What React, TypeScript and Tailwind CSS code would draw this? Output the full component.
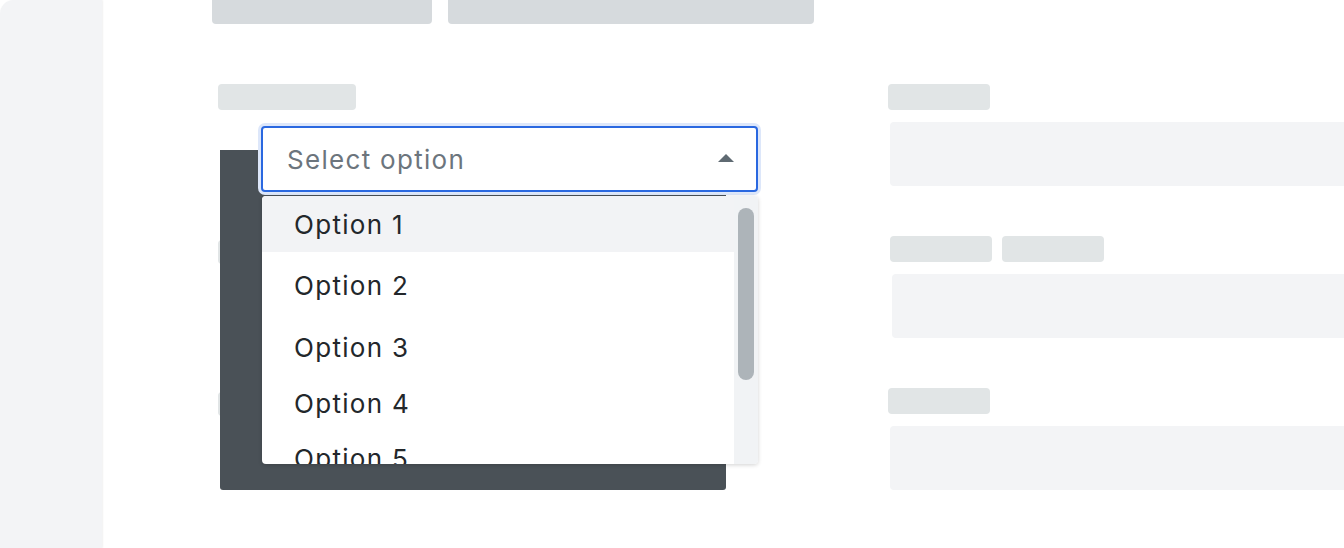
import React from 'react';

const options = [
  { label: 'Option 1', h: 'h-[56px]', active: true },
  { label: 'Option 2', h: 'h-[66px]', active: false },
  { label: 'Option 3', h: 'h-[58px]', active: false },
  { label: 'Option 4', h: 'h-[54px]', active: false },
  { label: 'Option 5', h: 'h-[56px]', active: false },
];

const FieldSkeleton: React.FC<{ labels: string[]; offset?: string }> = ({ labels, offset = '' }) => (
  <div className="flex flex-col">
    <div className="flex gap-[10px]">
      {labels.map((w, i) => (
        <div key={i} className={`${w} h-[26px] rounded-[4px] bg-[#e1e5e6]`} />
      ))}
    </div>
    <div className={`mt-[12px] h-[64px] w-[520px] rounded-[4px] bg-[#f3f4f6] ${offset}`} />
  </div>
);

export default function App() {
  return (
    <div className="flex h-[548px] w-[1344px] overflow-hidden bg-white font-['Inter','Noto_Sans',sans-serif]">
      {/* Sidebar */}
      <aside className="w-[102px] shrink-0 rounded-tl-[14px] bg-[#f3f4f6] shadow-[1px_0_2px_rgba(0,0,0,0.06)]" />

      {/* Main */}
      <main className="flex-1 pl-[110px]">
        <div className="flex gap-4">
          <div className="h-[24px] w-[220px] rounded-b-[4px] bg-[#d6dadd]" />
          <div className="h-[24px] w-[366px] rounded-b-[4px] bg-[#d6dadd]" />
        </div>

        <div className="mt-[60px] flex">
          {/* Left column */}
          <div className="w-[676px] shrink-0">
            <div className="ml-[6px] h-[26px] w-[138px] rounded-[4px] bg-[#e1e5e6]" />

            <div className="relative ml-[8px] mt-[40px] h-[340px] w-[506px]">
              <div className="absolute left-[-2px] top-[90px] h-[24px] w-[100px] rounded-[4px] bg-[#e1e5e6]" />
              <div className="absolute left-[-2px] top-[242px] h-[24px] w-[100px] rounded-[4px] bg-[#e1e5e6]" />
              <div className="absolute inset-0 rounded-b-[3px] bg-[#4a5157]" />

              {/* Select */}
              <div className="absolute left-[41px] top-[-24px] w-[497px]">
                <div className="flex h-[66px] items-center justify-between rounded-[4px] border-2 border-[#2a68e0] bg-white pl-[24px] pr-[22px] ring-[3px] ring-[#dde7fa]">
                  <span className="text-[26px] tracking-[0.05em] text-[#6c757d]">Select option</span>
                  <svg width="16" height="8" viewBox="0 0 16 8" className="mb-[2px]">
                    <path d="M8 0 L16 8 L0 8 Z" fill="#5f6a72" />
                  </svg>
                </div>

                <div className="relative mt-[4px] ml-[1px] flex h-[268px] overflow-hidden rounded-[4px] bg-white shadow-[0_1px_4px_rgba(0,0,0,0.18)]">
                  <ul className="flex-1">
                    {options.map((o) => (
                      <li
                        key={o.label}
                        className={`${o.h} flex items-center pl-[32px] text-[26px] tracking-[0.05em] text-[#23272b] ${o.active ? 'bg-[#f2f3f5]' : ''}`}
                      >
                        {o.label}
                      </li>
                    ))}
                  </ul>
                  <div className="w-[24px] shrink-0 bg-[#f1f3f5] px-[4px] pt-[12px]">
                    <div className="h-[172px] rounded-full bg-[#adb4b9]" />
                  </div>
                </div>
              </div>
            </div>
          </div>

          {/* Right column */}
          <div className="flex flex-1 flex-col gap-[50px]">
            <FieldSkeleton labels={['w-[102px]']} offset="ml-[2px]" />
            <div className="ml-[2px]">
              <FieldSkeleton labels={['w-[102px]', 'w-[102px]']} offset="ml-[2px]" />
            </div>
            <FieldSkeleton labels={['w-[102px]']} offset="ml-[2px]" />
          </div>
        </div>
      </main>
    </div>
  );
}
